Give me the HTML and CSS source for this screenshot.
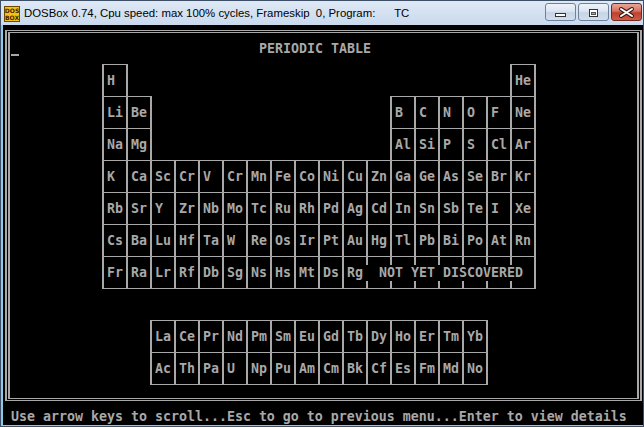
FILE: index.html
```html
<!DOCTYPE html>
<html lang="en">
<head>
<meta charset="utf-8">
<title>DOSBox - Periodic Table</title>
<link rel="stylesheet" href="styles.css">
</head>
<body>
<div class="window">
  <div class="titlebar">
    <svg class="app-icon" width="16" height="16" viewBox="0 0 16 16">
      <rect x="0.5" y="0.5" width="15" height="15" fill="#f2c21a" stroke="#6b4a00"/>
      <text x="8" y="7" text-anchor="middle" font-family="DejaVu Sans" font-weight="bold" font-size="6" fill="#4a1e00">DOS</text>
      <text x="8" y="14" text-anchor="middle" font-family="DejaVu Sans" font-weight="bold" font-size="6" fill="#4a1e00">BOX</text>
    </svg>
    <span class="title">DOSBox 0.74, Cpu speed: max 100% cycles, Frameskip  0, Program:      TC</span>
    <div class="controls">
      <button class="btn" aria-label="Minimize">
        <svg width="29" height="16" viewBox="0 0 29 16"><rect x="9.5" y="9.5" width="10" height="3" fill="#fff" stroke="#333"/></svg>
      </button>
      <button class="btn" aria-label="Maximize">
        <svg width="29" height="16" viewBox="0 0 29 16"><rect x="10.5" y="5.5" width="8" height="7" fill="#fff" stroke="#333"/><rect x="12.5" y="8.5" width="4" height="2" fill="#9aa7b8" stroke="#555"/></svg>
      </button>
      <button class="btn btn-close" aria-label="Close">
        <svg width="29" height="16" viewBox="0 0 29 16"><path d="M9 5 L20 12 M20 5 L9 12" stroke="#3a1a16" stroke-width="4" stroke-linecap="round"/><path d="M9 5 L20 12 M20 5 L9 12" stroke="#fff" stroke-width="2" stroke-linecap="round"/></svg>
      </button>
    </div>
  </div>
  <div class="client">
    <div class="screen">
      <div class="frame">
        <div class="frame-inner">
          <div class="header"><span class="cursor"></span><span class="heading">PERIODIC TABLE</span></div>
          <div class="ptable">
            <div class="cell">H</div><div class="cell c18">He</div>
            <div class="cell">Li</div><div class="cell">Be</div><div class="cell c13">B</div><div class="cell">C</div><div class="cell">N</div><div class="cell">O</div><div class="cell">F</div><div class="cell">Ne</div>
            <div class="cell">Na</div><div class="cell">Mg</div><div class="cell c13">Al</div><div class="cell">Si</div><div class="cell">P</div><div class="cell">S</div><div class="cell">Cl</div><div class="cell">Ar</div>
            <div class="cell">K</div><div class="cell">Ca</div><div class="cell">Sc</div><div class="cell">Cr</div><div class="cell">V</div><div class="cell">Cr</div><div class="cell">Mn</div><div class="cell">Fe</div><div class="cell">Co</div><div class="cell">Ni</div><div class="cell">Cu</div><div class="cell">Zn</div><div class="cell">Ga</div><div class="cell">Ge</div><div class="cell">As</div><div class="cell">Se</div><div class="cell">Br</div><div class="cell">Kr</div>
            <div class="cell">Rb</div><div class="cell">Sr</div><div class="cell">Y</div><div class="cell">Zr</div><div class="cell">Nb</div><div class="cell">Mo</div><div class="cell">Tc</div><div class="cell">Ru</div><div class="cell">Rh</div><div class="cell">Pd</div><div class="cell">Ag</div><div class="cell">Cd</div><div class="cell">In</div><div class="cell">Sn</div><div class="cell">Sb</div><div class="cell">Te</div><div class="cell">I</div><div class="cell">Xe</div>
            <div class="cell">Cs</div><div class="cell">Ba</div><div class="cell">Lu</div><div class="cell">Hf</div><div class="cell">Ta</div><div class="cell">W</div><div class="cell">Re</div><div class="cell">Os</div><div class="cell">Ir</div><div class="cell">Pt</div><div class="cell">Au</div><div class="cell">Hg</div><div class="cell">Tl</div><div class="cell">Pb</div><div class="cell">Bi</div><div class="cell">Po</div><div class="cell">At</div><div class="cell">Rn</div>
            <div class="cell">Fr</div><div class="cell">Ra</div><div class="cell">Lr</div><div class="cell">Rf</div><div class="cell">Db</div><div class="cell">Sg</div><div class="cell">Ns</div><div class="cell">Hs</div><div class="cell">Mt</div><div class="cell">Ds</div><div class="cell open-right">Rg</div>
            <div class="pending"><span class="pending-label">NOT YET DISCOVERED</span></div>
          </div>
          <div class="ftable">
            <div class="cell">La</div><div class="cell">Ce</div><div class="cell">Pr</div><div class="cell">Nd</div><div class="cell">Pm</div><div class="cell">Sm</div><div class="cell">Eu</div><div class="cell">Gd</div><div class="cell">Tb</div><div class="cell">Dy</div><div class="cell">Ho</div><div class="cell">Er</div><div class="cell">Tm</div><div class="cell">Yb</div>
            <div class="cell">Ac</div><div class="cell">Th</div><div class="cell">Pa</div><div class="cell">U</div><div class="cell">Np</div><div class="cell">Pu</div><div class="cell">Am</div><div class="cell">Cm</div><div class="cell">Bk</div><div class="cell">Cf</div><div class="cell">Es</div><div class="cell">Fm</div><div class="cell">Md</div><div class="cell">No</div>
          </div>
        </div>
      </div>
      <div class="status">Use arrow keys to scroll...Esc to go to previous menu...Enter to view details</div>
    </div>
  </div>
</div>
</body>
</html>
```

FILE: styles.css
```css
* { box-sizing: border-box; }

html, body {
  margin: 0;
  padding: 0;
  background: #000;
}

body {
  width: 644px;
  height: 427px;
  overflow: hidden;
}

.window {
  width: 644px;
  height: 427px;
  border: 1px solid #3d4f66;
  background: linear-gradient(#dfe9f5, #c9d9ed 24px, #9fc6e2 24px);
  display: flex;
  flex-direction: column;
}

/* ---------- title bar ---------- */
.titlebar {
  height: 24px;
  display: flex;
  align-items: center;
  flex: none;
}

.app-icon {
  flex: none;
  margin-left: 3px;
  margin-top: 1px;
}

.title {
  flex: 1;
  margin-left: 4px;
  font-family: "Liberation Sans", Arial, sans-serif;
  font-size: 11.4px;
  color: #000;
  white-space: pre;
}

.controls {
  display: flex;
  gap: 2px;
  align-self: flex-start;
  margin-top: 2px;
  margin-right: 1px;
}

.btn {
  width: 31px;
  height: 18px;
  padding: 0;
  border: 1px solid #6f819a;
  border-radius: 3px;
  background: linear-gradient(#eef3fa, #dbe5f1 45%, #c5d4e7 55%, #d2deed);
  display: flex;
  align-items: center;
  justify-content: center;
}

.btn-close {
  border-color: #6e2b22;
  background: linear-gradient(#e9a699, #d4705f 45%, #c0402d 55%, #cf5c48);
}

/* ---------- DOS screen ---------- */
.client {
  flex: 1;
  padding: 0 0 1px 2px;
  background: #8ccbe8;
}

.screen {
  width: 640px;
  height: 400px;
  background: #000;
  color: #a8a8a8;
  font-family: "DejaVu Sans Mono", monospace;
  font-weight: bold;
  font-size: 13.29px;
  line-height: 16px;
  overflow: hidden;
}

.frame {
  margin: 5px 0 0 2px;
  width: 637px;
  height: 371px;
  border: solid #a8a8a8;
  border-width: 1px 2px;
  padding: 1px;
}

.frame-inner {
  height: 367px;
  border: solid #a8a8a8;
  border-width: 1px 2px;
}

.header {
  display: flex;
  height: 16px;
  margin-top: 8px;
}

.cursor {
  width: 8px;
  height: 2px;
  margin: 13px 0 0 1px;
  background: #a8a8a8;
}

.heading {
  margin-left: 240px;
  white-space: pre;
}

.ptable {
  display: grid;
  grid-template-columns: repeat(18, 24px);
  grid-template-rows: repeat(7, 32px);
  margin: 7px 0 0 92px;
}

.ftable {
  display: grid;
  grid-template-columns: repeat(14, 24px);
  grid-template-rows: repeat(2, 32px);
  margin: 32px 0 0 140px;
}

.cell {
  width: 26px;
  height: 33px;
  border: solid #a8a8a8;
  border-width: 1px 2px;
  padding: 8px 0 0 3px;
  white-space: pre;
}

.c13 { grid-column-start: 13; }
.c18 { grid-column-start: 18; }

.open-right { border-right-width: 0; }

.pending {
  grid-column: 12 / span 7;
  width: 170px;
  height: 33px;
  border: solid #a8a8a8;
  border-width: 1px 2px 1px 0;
  background: repeating-linear-gradient(to right, #a8a8a8 0 2px, transparent 2px 24px);
}

.pending-label {
  display: block;
  width: 168px;
  height: 16px;
  margin: 8px 0 0 -3px;
  padding-left: 16px;
  background: #000;
  white-space: pre;
}

.status {
  margin-top: 8px;
  padding-left: 8px;
  white-space: pre;
}
```
